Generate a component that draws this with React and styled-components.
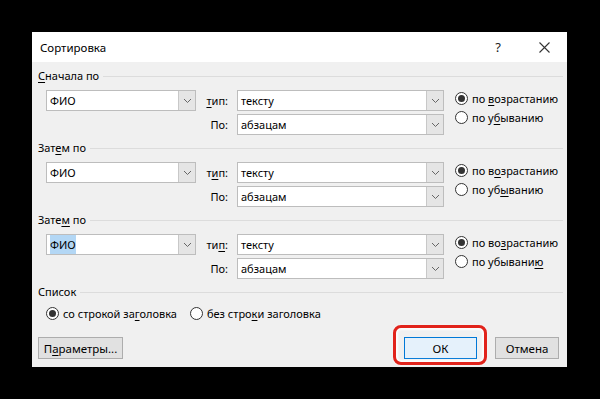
import styled, { createGlobalStyle } from 'styled-components'

const GlobalStyle = createGlobalStyle`
  html, body {
    margin: 0;
    background: #000;
  }
  body {
    font-family: "Noto Sans", "Open Sans", sans-serif;
    font-size: 11px;
    color: #000;
  }
`

const Screen = styled.div`
  width: 600px;
  height: 399px;
  box-sizing: border-box;
  padding: 32px 0 0 32px;
  background: #000;
`

const Dialog = styled.div`
  width: 535px;
  height: 335px;
  background: #f0f0f0;
  display: flex;
  flex-direction: column;
`

const TitleBar = styled.div`
  height: 30px;
  flex-shrink: 0;
  background: #fff;
  display: flex;
  align-items: center;
  padding-left: 8px;
`

const Title = styled.span`
  font-size: 11.5px;
  flex: 1;
`

const TitleButton = styled.span`
  width: 46px;
  height: 30px;
  display: flex;
  align-items: center;
  justify-content: center;
  font-size: 13px;
  color: #222;
`

const Content = styled.div`
  padding: 6px 4px 0 6px;
  display: flex;
  flex-direction: column;
`

const Section = styled.section`
  margin-bottom: 5px;
`

const Header = styled.div`
  height: 16px;
  display: flex;
  align-items: center;
  gap: 4px;
  line-height: 16px;
  &::after {
    content: '';
    flex: 1;
    height: 1px;
    background: #dcdcdc;
  }
`

const SortGrid = styled.div`
  margin-top: 6px;
  padding-left: 8px;
  display: grid;
  grid-template-columns: 150px 41px 207px auto;
  grid-template-rows: 21px 21px;
  row-gap: 3px;
`

const FieldLabel = styled.span`
  display: flex;
  align-items: center;
  justify-content: flex-end;
  padding-right: 9px;
`

const ComboBox = styled.div`
  display: flex;
  background: #fff;
  border: 1px solid #bdbdbd;
  box-sizing: border-box;
  height: 21px;
`

const ComboText = styled.span`
  flex: 1;
  display: flex;
  align-items: center;
  padding-left: 3px;
  line-height: 19px;
`

const Selected = styled.span`
  background: ${(p) => (p.$on ? '#b3d7f5' : 'transparent')};
`

const ComboButton = styled.span`
  width: 16px;
  background: #e5e5e5;
  border-left: 1px solid #c8c8c8;
  display: flex;
  align-items: center;
  justify-content: center;
`

const RadioStack = styled.div`
  grid-row: 1 / span 2;
  grid-column: 4;
  padding-left: 11px;
  display: flex;
  flex-direction: column;
  gap: 2px;
`

const RadioItem = styled.label`
  display: flex;
  align-items: center;
  gap: 4px;
  height: 17px;
  white-space: nowrap;
  margin-right: ${(p) => p.$gap || 0}px;
`

const RadioCircle = styled.span`
  width: 13px;
  height: 13px;
  box-sizing: border-box;
  border-radius: 50%;
  border: 1px solid #333;
  background: #fff;
  display: flex;
  align-items: center;
  justify-content: center;
  &::after {
    content: '';
    width: 7px;
    height: 7px;
    border-radius: 50%;
    background: ${(p) => (p.$checked ? '#333' : 'transparent')};
  }
`

const ListRow = styled.div`
  margin-top: 5px;
  padding-left: 8px;
  height: 16px;
  display: flex;
  align-items: center;
`

const ButtonRow = styled.div`
  margin-top: 16px;
  padding-right: 4px;
  display: flex;
  align-items: center;
`

const Button = styled.button`
  font: inherit;
  font-size: 11.5px;
  height: 22px;
  width: ${(p) => p.$w}px;
  padding: 0;
  color: #000;
  background: ${(p) => (p.$default ? '#e5f1fb' : '#e1e1e1')};
  border: 1px solid ${(p) => (p.$default ? '#0078d7' : '#adadad')};
`

const Spacer = styled.div`
  flex: 1;
`

const Highlight = styled.div`
  position: relative;
  margin-right: 18px;
  display: flex;
  &::after {
    content: '';
    position: absolute;
    top: -12px;
    left: -11px;
    right: -10px;
    bottom: -6px;
    border: 3px solid #e1231b;
    border-radius: 8px;
    box-shadow: inset 0 0 2px 2px rgba(255, 255, 255, 0.85), 0 0 3px rgba(255, 255, 255, 0.5);
    pointer-events: none;
  }
`

const U = styled.u`
  text-underline-offset: 2px;
`

function Chevron() {
  return (
    <svg width="9" height="6" viewBox="0 0 9 6">
      <path d="M1 1l3.5 3.5L8 1" fill="none" stroke="#666" strokeWidth="1" />
    </svg>
  )
}

function Combo({ value, selected }) {
  return (
    <ComboBox>
      <ComboText>
        <Selected $on={selected}>{value}</Selected>
      </ComboText>
      <ComboButton>
        <Chevron />
      </ComboButton>
    </ComboBox>
  )
}

function Radio({ checked, children, gap }) {
  return (
    <RadioItem $gap={gap}>
      <RadioCircle $checked={checked} />
      <span>{children}</span>
    </RadioItem>
  )
}

function SortSection({ title, type, asc, desc, selected }) {
  return (
    <Section>
      <Header>{title}</Header>
      <SortGrid>
        <Combo value="ФИО" selected={selected} />
        <FieldLabel>{type}</FieldLabel>
        <Combo value="тексту" />
        <RadioStack>
          <Radio checked>{asc}</Radio>
          <Radio>{desc}</Radio>
        </RadioStack>
        <span />
        <FieldLabel>По:</FieldLabel>
        <Combo value="абзацам" />
      </SortGrid>
    </Section>
  )
}

export default function App() {
  return (
    <Screen>
      <GlobalStyle />
      <Dialog>
        <TitleBar>
          <Title>Сортировка</Title>
          <TitleButton>?</TitleButton>
          <TitleButton>
            <svg width="11" height="11" viewBox="0 0 11 11">
              <path d="M0.5 0.5l10 10M10.5 0.5l-10 10" stroke="#333" strokeWidth="1.1" />
            </svg>
          </TitleButton>
        </TitleBar>
        <Content>
          <SortSection
            title={<span><U>С</U>начала по</span>}
            type={<span><U>т</U>ип:</span>}
            asc={<>по <U>в</U>озрастанию</>}
            desc={<>по у<U>б</U>ыванию</>}
          />
          <SortSection
            title={<span>Зат<U>е</U>м по</span>}
            type={<span>т<U>и</U>п:</span>}
            asc={<>по в<U>о</U>зрастанию</>}
            desc={<>по уб<U>ы</U>ванию</>}
          />
          <SortSection
            selected
            title={<span>Зате<U>м</U> по</span>}
            type={<span>ти<U>п</U>:</span>}
            asc={<>по во<U>з</U>растанию</>}
            desc={<>по убывани<U>ю</U></>}
          />
          <Header>Список</Header>
          <ListRow>
            <Radio checked gap={13}>со строкой за<U>г</U>оловка</Radio>
            <Radio>без стро<U>к</U>и заголовка</Radio>
          </ListRow>
          <ButtonRow>
            <Button $w={85}>П<U>а</U>раметры...</Button>
            <Spacer />
            <Highlight>
              <Button $w={73} $default>ОК</Button>
            </Highlight>
            <Button $w={64}>Отмена</Button>
          </ButtonRow>
        </Content>
      </Dialog>
    </Screen>
  )
}
